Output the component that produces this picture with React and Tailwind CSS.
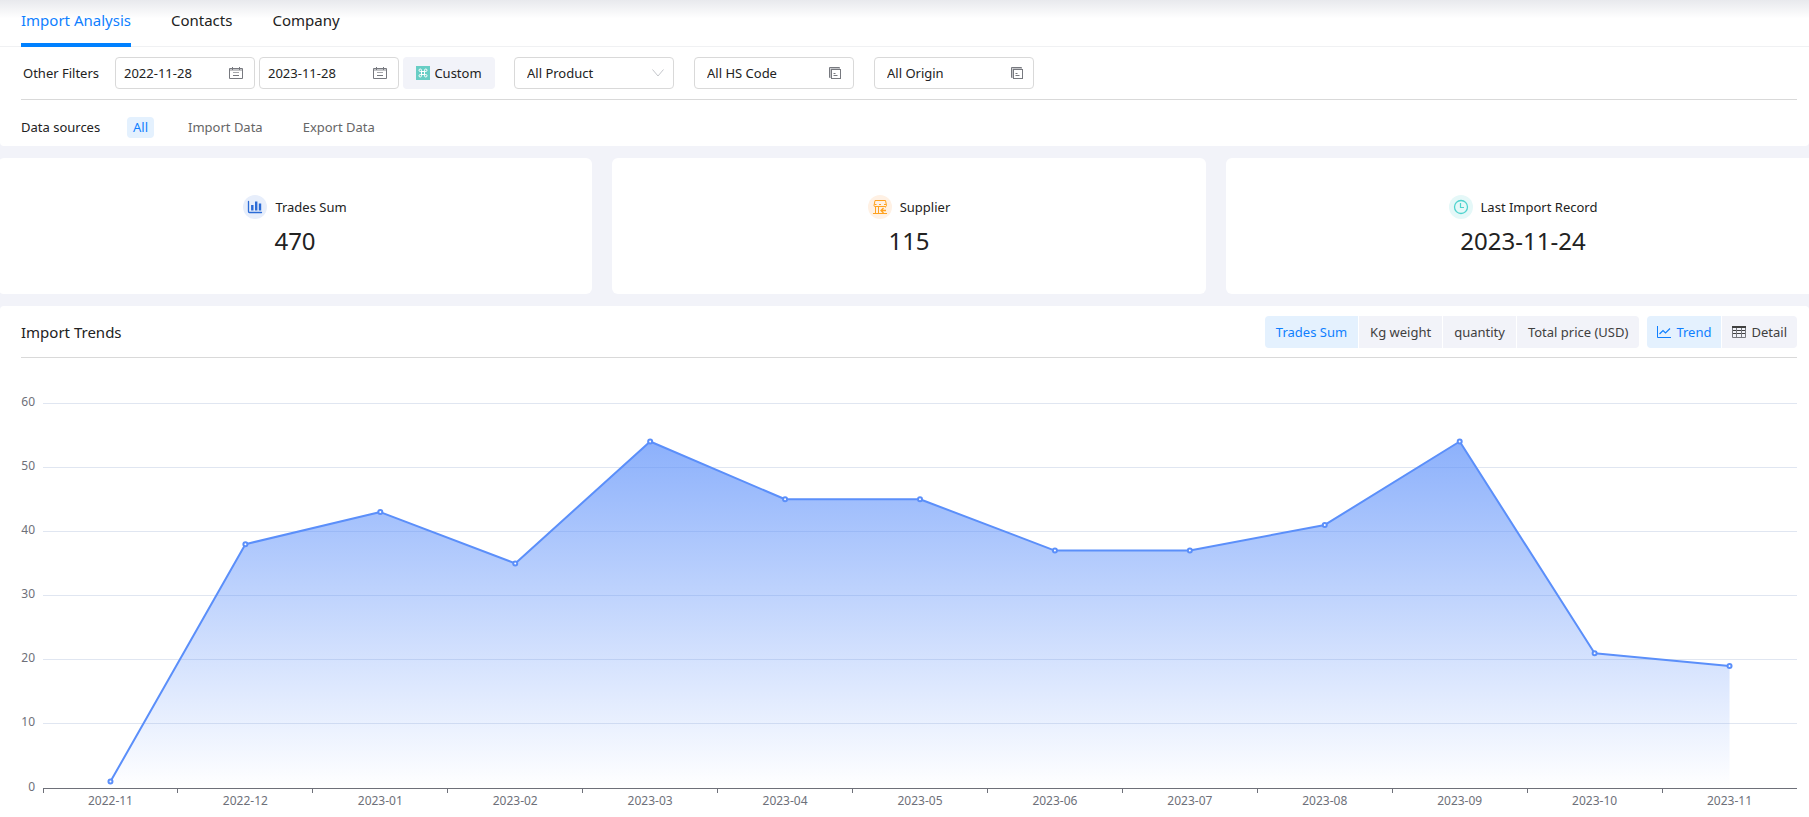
import React, { useLayoutEffect, useRef, useState } from 'react';

// --- Data ---

const tabs = ['Import Analysis', 'Contacts', 'Company'];
const sources = ['All', 'Import Data', 'Export Data'];
const metrics = ['Trades Sum', 'Kg weight', 'quantity', 'Total price (USD)'];

const trend = [
  { month: '2022-11', value: 1 },
  { month: '2022-12', value: 38 },
  { month: '2023-01', value: 43 },
  { month: '2023-02', value: 35 },
  { month: '2023-03', value: 54 },
  { month: '2023-04', value: 45 },
  { month: '2023-05', value: 45 },
  { month: '2023-06', value: 37 },
  { month: '2023-07', value: 37 },
  { month: '2023-08', value: 41 },
  { month: '2023-09', value: 54 },
  { month: '2023-10', value: 21 },
  { month: '2023-11', value: 19 },
];

// --- Icons ---

const CalendarIcon = () => (
  <svg width="14" height="12" viewBox="0 0 14 12" fill="none" stroke="#77797f" aria-hidden="true">
    <path d="M1 3h12" stroke="#c4c5c8" strokeWidth="2" />
    <path d="M4 5.5h6" stroke="#a5a6aa" />
    <path d="M0.5 1.5h13v10H0.5zM3.5 0v3M10.5 0v3M4 8.5h6" />
  </svg>
);

const ListIcon = () => (
  <svg width="12" height="12" viewBox="0 0 12 12" fill="none" stroke="#77797f" aria-hidden="true">
    <path d="M1.5 10.5H0.5V0.5H10.5V1.5" />
    <path d="M1.5 10V1.5H10" stroke="#c4c5c8" />
    <rect x="2.5" y="2.5" width="9" height="9" />
    <path d="M4.5 6.5h2M4.5 8.5h4" />
  </svg>
);

const ChevronIcon = () => (
  <svg width="12" height="8" viewBox="0 0 12 8" fill="none" stroke="#c4c6cb" aria-hidden="true">
    <path d="M0.5 0.5L6 7L11.5 0.5" />
  </svg>
);

const CommandIcon = () => (
  <svg width="14" height="14" viewBox="0 0 14 14" fill="none" aria-hidden="true">
    <rect width="14" height="14" fill="#68cec5" />
    <path
      d="M5.5 5.5V4.25A1.25 1.25 0 1 0 4.25 5.5H9.75A1.25 1.25 0 1 0 8.5 4.25V9.75A1.25 1.25 0 1 0 9.75 8.5H4.25A1.25 1.25 0 1 0 5.5 9.75Z"
      stroke="#fff"
    />
  </svg>
);

const BarsIcon = () => (
  <svg width="24" height="24" viewBox="0 0 24 24" fill="none" aria-hidden="true">
    <circle cx="12" cy="12" r="12" fill="#e7eefb" />
    <path d="M5.5 6.5v10a1 1 0 0 0 1 1H18.5" stroke="#2b6bd6" strokeWidth="1.3" strokeLinecap="round" />
    <path d="M9.3 10v5.5M13.2 6.5v9M17 8.5v7" stroke="#2b6bd6" strokeWidth="2.4" />
  </svg>
);

const ShopIcon = () => (
  <svg width="24" height="24" viewBox="0 0 24 24" fill="none" stroke="#ffa21f" aria-hidden="true">
    <circle cx="12" cy="12" r="12" fill="#fff1e4" stroke="none" />
    <path d="M7 5.5h10.5l1 5a1 1 0 0 1-1 1H7a1 1 0 0 1-1-1zM6.5 9.5h2M11 9.5h2M16 9.5h2" />
    <path d="M7.5 11.5v6.5M10.5 11.5v6.5M5 18.5h14M17.5 11.5v1" />
    <path d="M13 15.5h5M15.5 13l-2.5 2.5l2.5 2.5" strokeWidth="1.3" />
  </svg>
);

const ClockIcon = () => (
  <svg width="24" height="24" viewBox="0 0 24 24" fill="none" stroke="#4fd3ce" aria-hidden="true">
    <circle cx="12" cy="12" r="12" fill="#e5f8f8" stroke="none" />
    <circle cx="12" cy="12" r="6.5" strokeWidth="1.3" />
    <path d="M11.5 8v4.5h3.5" strokeWidth="1.2" />
  </svg>
);

const TrendIcon = () => (
  <svg width="14" height="12" viewBox="0 0 14 12" fill="none" stroke="currentColor" aria-hidden="true">
    <path d="M0.5 0v11.5H14" />
    <path d="M2.5 8L6 4.5L8.5 7L13 2.5" strokeWidth="1.2" />
  </svg>
);

const TableIcon = () => (
  <svg width="14" height="12" viewBox="0 0 14 12" fill="none" stroke="currentColor" aria-hidden="true">
    <path d="M0 1h14" strokeWidth="2" />
    <path d="M0 4.5h14M0 7.5h14" />
    <path d="M0.5 2v9.5h13V2M4.5 2v9.5M9.5 2v9.5" stroke="#77797f" />
  </svg>
);

const cards = [
  { label: 'Trades Sum', value: '470', Icon: BarsIcon },
  { label: 'Supplier', value: '115', Icon: ShopIcon },
  { label: 'Last Import Record', value: '2023-11-24', Icon: ClockIcon },
];

// --- Components ---

const FilterField = ({ label, defaultValue, width, children }) => (
  <label className={`flex h-8 items-center rounded border border-[#d9d9d9] bg-white ${width}`}>
    <input
      type="text"
      aria-label={label}
      defaultValue={defaultValue}
      className="min-w-0 flex-1 bg-transparent outline-none"
    />
    {children}
  </label>
);

const ToggleButton = ({ active, onClick, padding, children }) => (
  <button
    type="button"
    aria-pressed={active}
    onClick={onClick}
    className={`flex h-8 items-center gap-[5px] first:rounded-l last:rounded-r ${padding} ${
      active ? 'bg-[#e4f1fe] text-[#0f7fff]' : 'bg-[#f2f3f9] text-[#404040]'
    }`}
  >
    {children}
  </button>
);

const TrendChart = ({ data }) => {
  const ref = useRef(null);
  const [width, setWidth] = useState(1200);

  useLayoutEffect(() => {
    const measure = () => setWidth(ref.current.clientWidth);
    measure();
    const observer = new ResizeObserver(measure);
    observer.observe(ref.current);
    return () => observer.disconnect();
  }, []);

  const left = 22;
  const top = 45;
  const bottom = 430;
  const step = (width - left) / data.length;
  const yOf = (value) => bottom - (value / 60) * (bottom - top);
  const points = data.map((d, i) => [left + step * (i + 0.5), yOf(d.value)]);
  const line = points.map((p) => p.join(',')).join(' ');
  const area = `${points[0][0]},${bottom} ${line} ${points[points.length - 1][0]},${bottom}`;

  return (
    <div ref={ref} className="w-full">
      <svg width={width} height="459" className="block overflow-visible font-['Noto_Sans',sans-serif] text-xs">
        <defs>
          <linearGradient id="trend-fill" x1="0" y1="0" x2="0" y2="1">
            <stop offset="0" stopColor="#5b8ffa" stopOpacity="0.7" />
            <stop offset="1" stopColor="#5b8ffa" stopOpacity="0" />
          </linearGradient>
        </defs>
        {[0, 10, 20, 30, 40, 50, 60].map((tick) => {
          const y = Math.floor(yOf(tick)) + 0.5;
          return (
            <g key={tick}>
              <line x1={left} x2={width} y1={y} y2={y} stroke={tick === 0 ? '#6e7079' : '#e0e6f1'} />
              <text x="14" y={y + 2} textAnchor="end" fill="#6e7079">{tick}</text>
            </g>
          );
        })}
        <polygon points={area} fill="url(#trend-fill)" />
        {data.map((d, i) => {
          const x = Math.floor(left + step * i) + 0.5;
          return <line key={d.month} x1={x} x2={x} y1={bottom} y2={bottom + 5} stroke="#6e7079" />;
        })}
        <polyline points={line} fill="none" stroke="#5b8ffa" strokeWidth="2" strokeLinejoin="bevel" />
        {points.map(([x, y], i) => (
          <g key={data[i].month}>
            <circle cx={x} cy={y} r="2" fill="#fff" stroke="#5b8ffa" strokeWidth="2" />
            <text x={x} y={bottom + 17} textAnchor="middle" fill="#6e7079">{data[i].month}</text>
          </g>
        ))}
      </svg>
    </div>
  );
};

// --- Main Application ---

export default function App() {
  const [tab, setTab] = useState('Import Analysis');
  const [source, setSource] = useState('All');
  const [metric, setMetric] = useState('Trades Sum');
  const [view, setView] = useState('Trend');

  return (
    <div className="min-h-screen overflow-hidden bg-[#f2f3f9] font-['Noto_Sans',sans-serif] text-[13px] leading-5 text-[#222]">
      {/* Tabs and filters */}
      <section className="rounded-b bg-white">
        <nav className="flex h-[47px] gap-10 border-b border-[#f0f1f3] bg-linear-to-b from-[#e8e9ed] to-white to-40% pl-[21px] text-[15px]">
          {tabs.map((name) => (
            <button
              key={name}
              type="button"
              onClick={() => setTab(name)}
              className={`-mb-px h-[47px] border-b-4 pb-1 ${
                tab === name ? 'border-[#0081ff] text-[#0f7fff]' : 'border-transparent'
              }`}
            >
              {name}
            </button>
          ))}
        </nav>

        <div className="ml-[21px] mr-3">
          <div className="flex items-center gap-1 border-b border-[#d9d9d9] py-2.5">
            <span className="w-[90px] pl-0.5 whitespace-nowrap">Other Filters</span>
            <FilterField label="Start date" defaultValue="2022-11-28" width="w-[140px] pl-2 pr-[11px]">
              <CalendarIcon />
            </FilterField>
            <FilterField label="End date" defaultValue="2023-11-28" width="w-[140px] pl-2 pr-[11px]">
              <CalendarIcon />
            </FilterField>
            <button type="button" className="flex h-8 w-[92px] items-center justify-center gap-1 rounded-sm bg-[#f2f3f9]">
              <CommandIcon />
              Custom
            </button>
            <div className="ml-[15px] flex gap-5">
              <div className="relative flex w-[160px] items-center">
                <select
                  aria-label="Product"
                  className="h-8 w-full appearance-none rounded border border-[#d9d9d9] bg-white pl-3 outline-none"
                >
                  <option>All Product</option>
                </select>
                <span className="pointer-events-none absolute right-2.5">
                  <ChevronIcon />
                </span>
              </div>
              <FilterField label="HS Code" defaultValue="All HS Code" width="w-[160px] pl-3 pr-3">
                <ListIcon />
              </FilterField>
              <FilterField label="Origin" defaultValue="All Origin" width="w-[160px] pl-3 pr-2.5">
                <ListIcon />
              </FilterField>
            </div>
          </div>

          <div className="flex h-[46px] items-center pt-2">
            <span className="w-[106px]">Data sources</span>
            <div className="flex gap-7">
              {sources.map((name) => (
                <button
                  key={name}
                  type="button"
                  onClick={() => setSource(name)}
                  className={`h-[21px] rounded-sm px-1.5 ${
                    source === name ? 'bg-[#e4f1fe] text-[#0f7fff]' : 'text-[#666]'
                  }`}
                >
                  {name}
                </button>
              ))}
            </div>
          </div>
        </div>
      </section>

      {/* Summary cards */}
      <section className="-ml-0.5 -mr-[11px] grid grid-cols-3 gap-5 py-3">
        {cards.map(({ label, value, Icon }) => (
          <div key={label} className="flex h-[136px] flex-col items-center rounded-md bg-white pt-[37px]">
            <div className="flex items-center gap-2">
              <Icon />
              <span>{label}</span>
            </div>
            <strong className="mt-2 text-2xl leading-7 font-normal">{value}</strong>
          </div>
        ))}
      </section>

      {/* Trend chart */}
      <section className="rounded-t bg-white pl-[21px] pr-3">
        <div className="flex items-center justify-between border-b border-[#d9d9d9] pt-2.5 pb-[9px]">
          <h2 className="text-[15px]">Import Trends</h2>
          <div className="flex gap-2">
            <div className="flex gap-px">
              {metrics.map((name) => (
                <ToggleButton
                  key={name}
                  padding="px-[11px]"
                  active={metric === name}
                  onClick={() => setMetric(name)}
                >
                  {name}
                </ToggleButton>
              ))}
            </div>
            <div className="flex gap-px">
              <ToggleButton padding="px-2.5" active={view === 'Trend'} onClick={() => setView('Trend')}>
                <TrendIcon />
                Trend
              </ToggleButton>
              <ToggleButton padding="px-2.5" active={view === 'Detail'} onClick={() => setView('Detail')}>
                <TableIcon />
                Detail
              </ToggleButton>
            </div>
          </div>
        </div>
        <TrendChart data={trend} />
      </section>
    </div>
  );
}
